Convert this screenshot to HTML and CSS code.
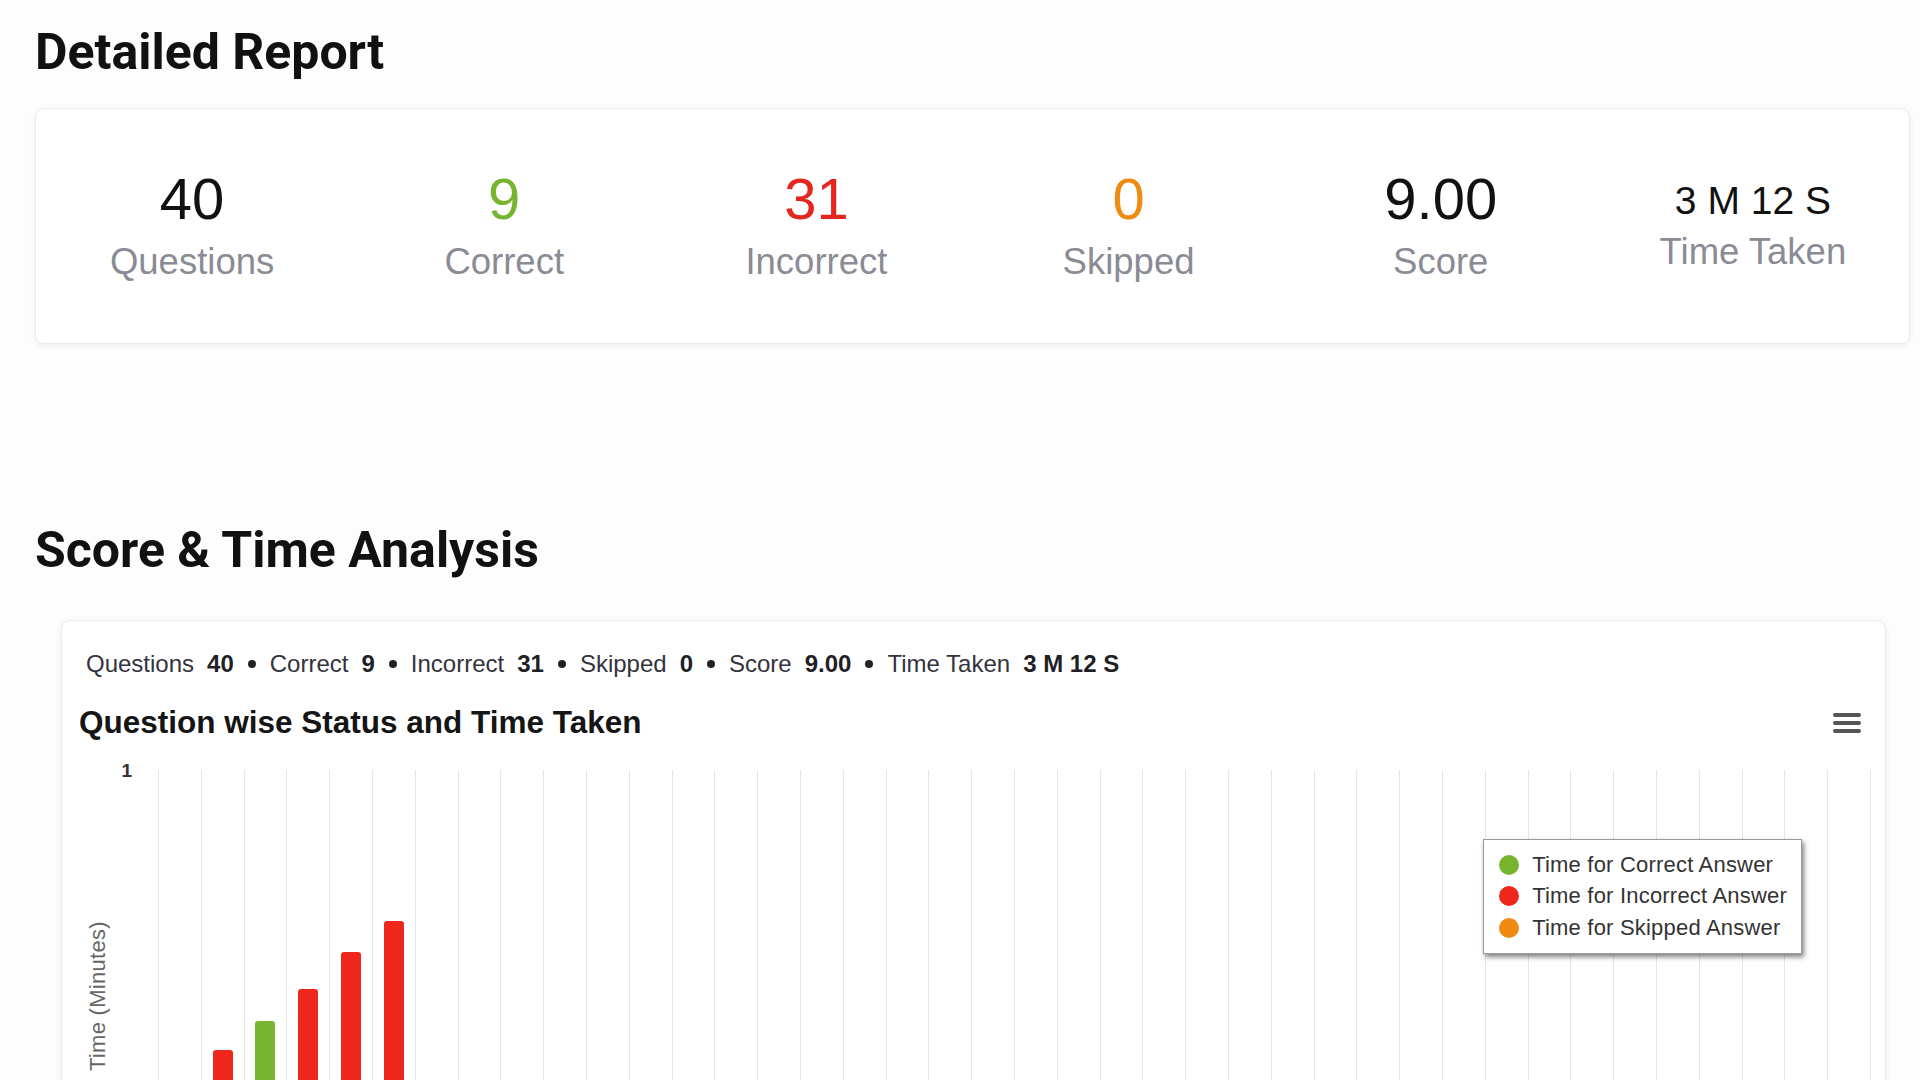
FILE: index.html
```html
<!DOCTYPE html>
<html lang="en">

<head>
    <meta charset="UTF-8">
    <meta name="viewport" content="width=device-width, initial-scale=1.0">
    <title>Detailed Report</title>
    <link rel="stylesheet" href="styles.css">
</head>

<body>
    <div class="page">
        <h1 class="section-title">Detailed Report</h1>

        <div class="card stats-card">
            <div class="stat">
                <div class="stat-value">40</div>
                <div class="stat-label">Questions</div>
            </div>
            <div class="stat">
                <div class="stat-value correct">9</div>
                <div class="stat-label">Correct</div>
            </div>
            <div class="stat">
                <div class="stat-value incorrect">31</div>
                <div class="stat-label">Incorrect</div>
            </div>
            <div class="stat">
                <div class="stat-value skipped">0</div>
                <div class="stat-label">Skipped</div>
            </div>
            <div class="stat">
                <div class="stat-value">9.00</div>
                <div class="stat-label">Score</div>
            </div>
            <div class="stat stat-time">
                <div class="stat-value">3 M 12 S</div>
                <div class="stat-label">Time Taken</div>
            </div>
        </div>

        <h1 class="section-title analysis-title">Score &amp; Time Analysis</h1>

        <div class="card chart-card">
            <div class="summary">
                <span>Questions</span><b>40</b><i class="dot"></i>
                <span>Correct</span><b>9</b><i class="dot"></i>
                <span>Incorrect</span><b>31</b><i class="dot"></i>
                <span>Skipped</span><b>0</b><i class="dot"></i>
                <span>Score</span><b>9.00</b><i class="dot"></i>
                <span>Time Taken</span><b>3 M 12 S</b>
            </div>

            <div class="chart-head">
                <h2 class="chart-title">Question wise Status and Time Taken</h2>
                <button type="button" class="chart-menu" aria-label="Chart menu">
                    <span></span><span></span><span></span>
                </button>
            </div>

            <div class="chart-body">
                <div class="y-axis">
                    <span class="y-tick">1</span>
                    <span class="y-title">Time (Minutes)</span>
                </div>
                <div class="plot" id="plot">
                    <div class="legend">
                        <div class="legend-item"><i class="legend-dot correct-bg"></i>Time for Correct Answer</div>
                        <div class="legend-item"><i class="legend-dot incorrect-bg"></i>Time for Incorrect Answer</div>
                        <div class="legend-item"><i class="legend-dot skipped-bg"></i>Time for Skipped Answer</div>
                    </div>
                </div>
            </div>
        </div>
    </div>

    <script>
        // minutes spent per question, and its status
        var answers = [
            [0.2, 'incorrect'], [0.38, 'incorrect'], [0.445, 'correct'], [0.515, 'incorrect'],
            [0.597, 'incorrect'], [0.666, 'incorrect'], [0.05, 'incorrect'], [0.04, 'correct'],
            [0.03, 'incorrect'], [0.03, 'incorrect'], [0.02, 'correct'], [0.03, 'incorrect'],
            [0.02, 'incorrect'], [0.02, 'incorrect'], [0.03, 'correct'], [0.02, 'incorrect'],
            [0.02, 'incorrect'], [0.02, 'incorrect'], [0.02, 'correct'], [0.02, 'incorrect'],
            [0.02, 'incorrect'], [0.02, 'incorrect'], [0.02, 'correct'], [0.02, 'incorrect'],
            [0.02, 'incorrect'], [0.02, 'incorrect'], [0.02, 'correct'], [0.02, 'incorrect'],
            [0.02, 'incorrect'], [0.02, 'incorrect'], [0.02, 'correct'], [0.02, 'incorrect'],
            [0.02, 'incorrect'], [0.02, 'incorrect'], [0.02, 'incorrect'], [0.02, 'incorrect'],
            [0.02, 'incorrect'], [0.02, 'incorrect'], [0.02, 'incorrect'], [0.02, 'incorrect']
        ];

        document.addEventListener("DOMContentLoaded", function () {
            var plot = document.getElementById('plot');
            var legend = plot.querySelector('.legend');
            answers.forEach(function (answer) {
                var col = document.createElement('div');
                col.className = 'plot-col';
                var bar = document.createElement('div');
                bar.className = 'bar ' + answer[1] + '-bg';
                bar.style.height = (answer[0] * 100) + '%';
                col.appendChild(bar);
                plot.insertBefore(col, legend);
            });
        });
    </script>
</body>

</html>
```

FILE: styles.css
```css
html,
body {
    overflow: hidden;
}

body {
    font-family: "Liberation Sans", Arial, sans-serif;
    margin: 0;
    padding: 0;
    background-color: #fdfdfd;
    color: #111;
}

.page {
    padding: 22px 10px 0 35px;
}

.section-title {
    font-family: Roboto, "Liberation Sans", sans-serif;
    font-weight: 700;
    font-size: 50px;
    line-height: 1.2;
    margin: 0 0 26px;
    color: #111;
}

.analysis-title {
    margin-top: 176px;
    margin-bottom: 40px;
}

.card {
    background-color: #fff;
    border: 1px solid #ebebeb;
    border-radius: 9px;
    box-shadow: 0 2px 6px rgba(0, 0, 0, 0.07);
}

/* top stats */

.stats-card {
    display: grid;
    grid-template-columns: repeat(6, 1fr);
    align-items: center;
    padding: 61px 0 62px;
}

.stat {
    display: flex;
    flex-direction: column;
    align-items: center;
    gap: 16px;
}

.stat-value {
    font-size: 58px;
    line-height: 1;
    color: #111;
}

.stat-time .stat-value {
    font-size: 39px;
}

.stat-time {
    gap: 14px;
}

.stat-label {
    font-size: 36.5px;
    line-height: 1;
    color: #8a8b95;
}

.correct {
    color: #78b52f;
}

.incorrect {
    color: #e5261e;
}

.skipped {
    color: #f08a11;
}

.correct-bg {
    background-color: #78b52f;
}

.incorrect-bg {
    background-color: #ee261c;
}

.skipped-bg {
    background-color: #f08a11;
}

/* chart card */

.chart-card {
    margin: 0 24px 0 26px;
    padding: 29px 14px 60px 17px;
}

.summary {
    display: flex;
    align-items: center;
    padding-left: 7px;
    font-size: 24px;
    line-height: 1.2;
    color: #33333d;
}

.summary b {
    margin-left: 13px;
    color: #1f1f26;
}

.dot {
    width: 8px;
    height: 8px;
    border-radius: 50%;
    background-color: #22222a;
    margin: 0 14px;
}

.chart-head {
    display: flex;
    justify-content: space-between;
    align-items: center;
    margin-top: 26px;
    padding-right: 10px;
}

.chart-title {
    margin: 0;
    font-size: 31.5px;
    line-height: 1.2;
    font-weight: 700;
    color: #151515;
}

.chart-menu {
    display: flex;
    flex-direction: column;
    gap: 4px;
    width: 28px;
    padding: 0;
    border: none;
    background: none;
    cursor: pointer;
}

.chart-menu span {
    height: 4px;
    border-radius: 2px;
    background-color: #555;
}

.chart-body {
    display: flex;
    height: 452px;
    margin-top: 28px;
}

.y-axis {
    position: relative;
    width: 79px;
    display: flex;
    align-items: center;
}

.y-tick {
    position: absolute;
    top: -10px;
    right: 26px;
    font-size: 19px;
    font-weight: 700;
    color: #333;
}

.y-title {
    writing-mode: vertical-rl;
    transform: rotate(180deg);
    margin-left: 6px;
    font-size: 22px;
    letter-spacing: 0.3px;
    color: #666;
}

.plot {
    position: relative;
    flex: 1;
    display: grid;
    grid-template-columns: repeat(40, 1fr);
    border-right: 1px solid #e6e6e6;
}

.plot-col {
    display: flex;
    align-items: flex-end;
    justify-content: center;
    border-left: 1px solid #e6e6e6;
}

.bar {
    width: 20px;
    border-radius: 3px 3px 0 0;
}

.legend {
    position: absolute;
    top: 69px;
    right: 68px;
    padding: 9px 14px 9px 15px;
    background-color: #fff;
    border: 1px solid #999;
    box-shadow: 2px 3px 5px rgba(0, 0, 0, 0.5);
}

.legend-item {
    display: flex;
    align-items: center;
    height: 31.5px;
    font-size: 22px;
    letter-spacing: 0.2px;
    color: #333;
}

.legend-dot {
    width: 20px;
    height: 20px;
    border-radius: 50%;
    margin-right: 13px;
}
```
